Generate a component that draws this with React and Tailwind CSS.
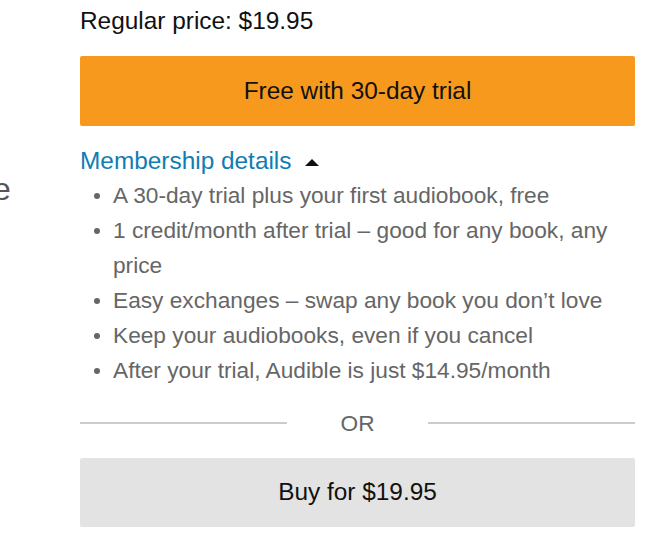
const perks = [
  'A 30-day trial plus your first audiobook, free',
  '1 credit/month after trial \u2013 good for any book, any price',
  'Easy exchanges \u2013 swap any book you don\u2019t love',
  'Keep your audiobooks, even if you cancel',
  'After your trial, Audible is just $14.95/month',
];

export default function App() {
  return (
    <div className="flex bg-white min-h-[543px] font-['Liberation_Sans',Arial,sans-serif]">
      <div className="w-[80px] shrink-0 overflow-hidden pt-[169px]">
        <div className="-ml-[7px] text-[32px] leading-[40px] text-[#555]">e</div>
      </div>

      <div className="w-[555px] shrink-0">
        <p className="pt-[6px] text-[24.4px] leading-[30px] text-[#111]">Regular price: $19.95</p>

        <button className="mt-[20px] flex h-[70px] w-full items-center justify-center rounded-[2px] bg-[#f7991d] text-[24.4px] text-[#111]">
          Free with 30-day trial
        </button>

        <div className="mt-[20px] flex items-center text-[24.4px] leading-[30px] text-[#0f7db3]">
          <span>Membership details</span>
          <span className="ml-[14px] mt-[2px] h-0 w-0 border-x-[7px] border-b-[7px] border-x-transparent border-b-[#111]" />
        </div>

        <ul className="mt-[2px] text-[22.7px] leading-[35px] text-[#666]">
          {perks.map((p) => (
            <li key={p} className="flex">
              <span className="flex h-[35px] w-[33px] shrink-0 items-center justify-center pl-[1px]">
                <span className="h-[6px] w-[6px] rounded-full bg-[#666]" />
              </span>
              <span>{p}</span>
            </li>
          ))}
        </ul>

        <div className="mt-[20px] flex h-[30px] items-center">
          <div className="h-[2px] flex-1 bg-[#cccccc]" />
          <span className="px-[53px] text-[22.7px] text-[#666]">OR</span>
          <div className="h-[2px] flex-1 bg-[#cccccc]" />
        </div>

        <button className="mt-[20px] flex h-[69px] w-full items-center justify-center rounded-[2px] bg-[#e3e3e3] text-[24.4px] text-[#111]">
          Buy for $19.95
        </button>
      </div>
    </div>
  );
}
